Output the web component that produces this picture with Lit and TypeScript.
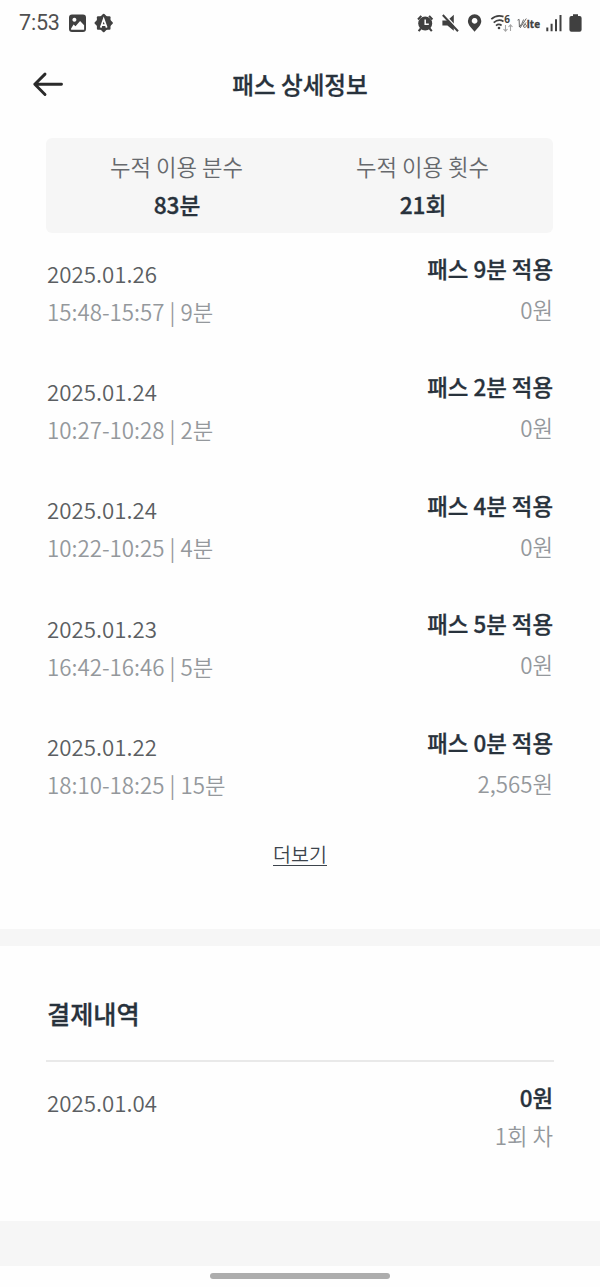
import { LitElement, html, css, svg } from "lit";
import { customElement, property } from "lit/decorators.js";

interface Entry {
  date: string;
  time: string;
  title: string;
  price: string;
}

const rides: Entry[] = [
  { date: "2025.01.26", time: "15:48-15:57 | 9분", title: "패스 9분 적용", price: "0원" },
  { date: "2025.01.24", time: "10:27-10:28 | 2분", title: "패스 2분 적용", price: "0원" },
  { date: "2025.01.24", time: "10:22-10:25 | 4분", title: "패스 4분 적용", price: "0원" },
  { date: "2025.01.23", time: "16:42-16:46 | 5분", title: "패스 5분 적용", price: "0원" },
  { date: "2025.01.22", time: "18:10-18:25 | 15분", title: "패스 0분 적용", price: "2,565원" },
];

@customElement("status-bar")
class StatusBar extends LitElement {
  static styles = css`
    :host { display: block; height: 46px; }
    .bar { display: flex; justify-content: space-between; height: 46px; }
    .left { display: flex; align-items: center; padding-left: 19px; }
    .clock { font: 400 21.5px/46px Roboto, sans-serif; color: #505050; width: 49px; letter-spacing: -0.2px; white-space: nowrap; }
    svg { display: block; }
    .txt { font-family: "Open Sans", sans-serif; font-weight: 700; }
  `;
  render() {
    const teeth = [0, 45].map(
      (a) => svg`<rect x="48.900" y="16.200" width="13.600" height="13.600" rx="1" transform="rotate(${a} 55.700 23)"/>`,
    );
    return html`<div class="bar">
      <div class="left">
        <span class="clock">7:53</span>
        <svg width="50" height="46" viewBox="20 0 50 46" fill="#404040">
          <path fill-rule="evenodd" transform="translate(.5 0)" d="M23.500 14.500h11a3 3 0 0 1 3 3v11.500a3 3 0 0 1-3 3h-11a3 3 0 0 1-3-3v-11.500a3 3 0 0 1 3-3zM22.600 28.600v1.200h13v-4.600l-4-4.100-4.600 5.100-1.900-1.700z M25.900 17.800a2 2 0 1 0 0.010 0z"/>
          ${teeth}
          <path d="M52.700 27.600l3-8.600 3 8.600M53.900 25.200h3.600" fill="none" stroke="#fff" stroke-width="1.700"/>
        </svg>
      </div>
      <svg width="190" height="46" viewBox="410 0 190 46" fill="#404040">
        <circle cx="425.200" cy="23.500" r="7"/>
        <path d="M418 19.500l3.300-3.600M432.400 19.500l-3.300-3.600M420.800 28.500l-2.200 2.700M429.600 28.500l2.200 2.700" stroke="#404040" stroke-width="2"/>
        <path d="M425.200 19.500v4.700h3.600" fill="none" stroke="#fff" stroke-width="1.500"/>
        <path d="M442.400 20.500h5l6.400-5.700v16l-6.400-5.200h-5z"/>
        <path d="M444.300 14.200l15 16.400" stroke="#fff" stroke-width="1.500"/>
        <path d="M442.800 15l15.200 16.200" stroke="#404040" stroke-width="2"/>
        <path fill-rule="evenodd" d="M474.600 14.300a6.700 6.700 0 0 1 6.700 6.700c0 4.300-4.200 7.500-6.700 10.800-2.500-3.300-6.700-6.500-6.700-10.800a6.700 6.700 0 0 1 6.700-6.700zM474.600 18a2.900 2.900 0 1 0 .010 0z"/>
        <g fill="none" stroke="#404040" stroke-width="1.700">
          <path d="M491.300 19.200Q496.500 14.300 503.500 16.600"/>
          <path d="M493.700 22.600Q498.500 18.400 503.500 21.400"/>
          <path d="M496 25.600Q498.800 23.300 501.600 25.500"/>
        </g>
        <circle cx="499" cy="28" r="1.300"/>
        <text class="txt" x="504.200" y="22.600" font-size="10">6</text>
        <path d="M505.500 25v6M503.500 29l2 2.200 2-2.200M510.500 31v-6M508.500 27l2-2.200 2 2.200" fill="none" stroke="#a5a5a5" stroke-width="1.100"/>
        <path d="M517.500 20.200l1.600-.8.300 7.600q3-3.500 4.200-7.500M526.300 18.500L520 28M526 22.500q-3 2.500-2.300 4.500c1 1.300 3-.2 2.700-1.600-.3-1.300-1.800-1-2.500.1" fill="none" stroke="#555" stroke-width="0.900"/>
        <text class="txt" x="526.800" y="28" font-size="10.500" textLength="13.200" lengthAdjust="spacingAndGlyphs" stroke="#404040" stroke-width=".3">lte</text>
        <path d="M547.300 27.500v3.700M551.600 23.800v7.400M556 19.300v11.900M560.500 15v16.200" stroke="#404040" stroke-width="2"/>
        <path d="M573 14.200h5v1.700h1.600q2 0 2 2v11.800q0 2-2 2h-8.200q-2 0-2-2v-11.800q0-2 2-2h1.600z"/>
      </svg>
    </div>`;
  }
}

@customElement("history-row")
class HistoryRow extends LitElement {
  @property({ attribute: false }) entry!: Entry;
  static styles = css`
    :host { display: flex; justify-content: space-between; }
    .left, .right { display: flex; flex-direction: column; white-space: nowrap; }
    .left { padding-top: 3.6px; gap: 6px; }
    .right { align-items: flex-end; gap: 9px; margin-top: -1px; }
    .date, .time, .title, .price { line-height: 32px; }
    .date { font-size: 22.3px; color: #5b5e62; font-weight: 350; }
    .time, .price { font-size: 22.3px; color: #94989c; font-weight: 350; }
    .title { font-size: 22.4px; font-weight: 500; color: #28323c; -webkit-text-stroke: 0.3px #28323c; }
    :host([compact]) .right { gap: 6px; }
  `;
  render() {
    const e = this.entry;
    return html`
      <div class="left"><span class="date">${e.date}</span><span class="time">${e.time}</span></div>
      <div class="right"><span class="title">${e.title}</span><span class="price">${e.price}</span></div>`;
  }
}

@customElement("app-root")
class AppRoot extends LitElement {
  static styles = css`
    :host { display: block; height: 1287px; background: #fefefe; overflow: hidden; font-family: "Noto Sans CJK KR", sans-serif; color: #28323c; }
    .header { display: grid; grid-template-columns: 100px 1fr 100px; height: 76px; align-items: center; }
    .back { display: block; margin-left: 30px; }
    .heading { text-align: center; font-size: 23.6px; line-height: 36px; }
    .heading, .value, .section { font-weight: 500; -webkit-text-stroke: 0.3px #28323c; }
    .summary { margin: 16px 47px 0 46px; height: 95px; padding: 0 7.5px; box-sizing: border-box; border-radius: 6px; background: #f6f6f6; display: grid; grid-template-columns: 1fr 1fr; text-align: center; }
    .cell { display: flex; flex-direction: column; padding-top: 12px; gap: 7px; }
    .label { font-size: 22.3px; line-height: 32px; font-weight: 350; color: #66696d; }
    .value { font-size: 22.7px; line-height: 32px; padding-left: 1px; }
    .list { display: flex; flex-direction: column; padding: 20px 47px 0; }
    .row { height: 118.4px; }
    .more { display: flex; justify-content: center; margin-top: -4px; }
    .link { font-size: 19.5px; line-height: 26px; height: 24px; border-bottom: 1px solid #3c444c; color: #3c444c; font-weight: 350; }
    .band { height: 17px; background: #f6f6f6; margin-top: 63px; }
    .payments { height: 275px; box-sizing: border-box; padding: 49px 47px 0; }
    .section { font-size: 25.2px; line-height: 36px; }
    .rule { height: 2px; background: #e9e9e9; margin: 29px -1px 20px; }
    .foot { height: 45px; background: #f6f6f6; }
    .handle { width: 180px; height: 6px; border-radius: 3px; background: #adadad; margin: 7px auto 0; }
  `;
  render() {
    return html`
      <status-bar></status-bar>
      <div class="header">
        <svg class="back" width="36" height="36" viewBox="0 0 36 36" fill="none" stroke="#2a2a2a" stroke-width="2.900" stroke-linecap="round" stroke-linejoin="round"><path d="M31.500 18.300H4.800M15 8.100L4.800 18.300 15 28.500"/></svg>
        <div class="heading">패스 상세정보</div>
      </div>
      <div class="summary">
        <div class="cell"><span class="label">누적 이용 분수</span><span class="value">83분</span></div>
        <div class="cell"><span class="label">누적 이용 횟수</span><span class="value">21회</span></div>
      </div>
      <div class="list">
        ${rides.map((r) => html`<history-row class="row" .entry=${r}></history-row>`)}
      </div>
      <div class="more"><span class="link">더보기</span></div>
      <div class="band"></div>
      <div class="payments">
        <div class="section">결제내역</div>
        <div class="rule"></div>
        <history-row compact .entry=${{ date: "2025.01.04", time: "", title: "0원", price: "1회 차" }}></history-row>
      </div>
      <div class="foot"></div>
      <div class="handle"></div>`;
  }
}
